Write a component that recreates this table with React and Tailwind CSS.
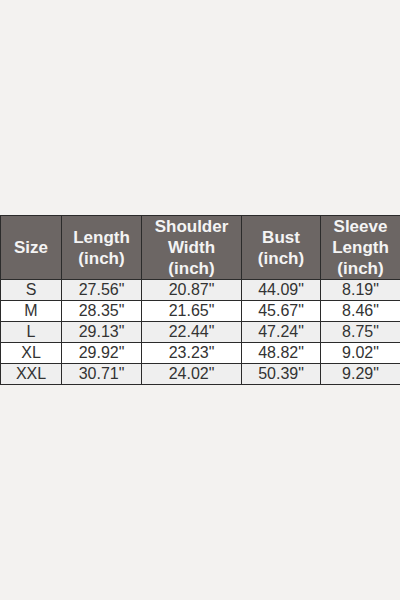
const headers = [
  ["Size"],
  ["Length", "(inch)"],
  ["Shoulder", "Width", "(inch)"],
  ["Bust", "(inch)"],
  ["Sleeve", "Length", "(inch)"],
];

const rows = [
  ["S", '27.56"', '20.87"', '44.09"', '8.19"'],
  ["M", '28.35"', '21.65"', '45.67"', '8.46"'],
  ["L", '29.13"', '22.44"', '47.24"', '8.75"'],
  ["XL", '29.92"', '23.23"', '48.82"', '9.02"'],
  ["XXL", '30.71"', '24.02"', '50.39"', '9.29"'],
];

export default function App() {
  return (
    <div className="h-[600px] w-[400px] bg-[#f3f2f0] flex flex-col justify-center font-['Liberation_Sans',Arial,sans-serif]">
      <table className="w-[400px] border-collapse table-fixed">
        <colgroup>
          <col className="w-[61px]" />
          <col className="w-[80px]" />
          <col className="w-[100px]" />
          <col className="w-[79px]" />
          <col className="w-[80px]" />
        </colgroup>
        <thead>
          <tr className="h-[63px] bg-[#6c6664]">
            {headers.map((h, i) => (
              <th key={i} className="border border-[#2b2b2b] text-[#f4f4f4] text-[17px] leading-[21px] font-bold text-center align-middle p-0">
                {h.map((line) => (
                  <div key={line}>{line}</div>
                ))}
              </th>
            ))}
          </tr>
        </thead>
        <tbody>
          {rows.map((r, i) => (
            <tr key={r[0]} className={i % 2 === 0 ? "h-[21px] bg-[#efefef]" : "h-[21px] bg-white"}>
              {r.map((c, j) => (
                <td key={j} className="border border-[#2b2b2b] text-[#333333] text-[16px] leading-[20px] text-center p-0">
                  {c}
                </td>
              ))}
            </tr>
          ))}
        </tbody>
      </table>
    </div>
  );
}
